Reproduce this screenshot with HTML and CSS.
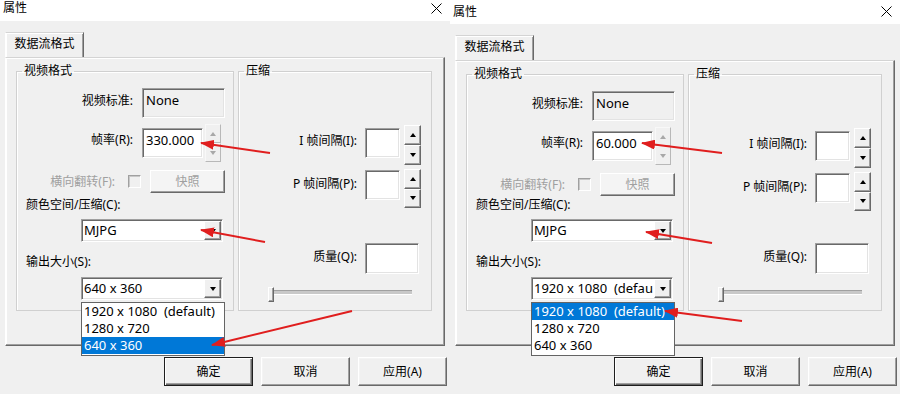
FILE: index.html
```html
<!DOCTYPE html>
<html lang="zh">
<head>
<meta charset="utf-8">
<title>属性</title>
<link rel="stylesheet" href="styles.css">
</head>
<body>
<div class="screen">

  <section class="dlg">
    <header class="titlebar">
      <span class="title">属性</span>
      <svg class="close" width="11" height="11" viewBox="0 0 11 11"><path d="M0.5 0.5L10.5 10.5M10.5 0.5L0.5 10.5" stroke="#000" stroke-width="1"/></svg>
    </header>
    <div class="body">
      <div class="tabs"><div class="tab">数据流格式</div></div>
      <div class="panel">
        <fieldset class="group g-video">
          <legend>视频格式</legend>
          <div class="row r1"><span class="lbl w-main">视频标准:</span><div class="edit ro w-none">None</div></div>
          <div class="row r2"><span class="lbl w-main">帧率(R):</span><div class="edit w-rate">330.000</div><div class="spin dis"><span class="sb"><i class="up"></i></span><span class="sb"><i class="dn"></i></span></div></div>
          <div class="row r3"><span class="lbl w-flip">横向翻转(F):</span><span class="check"></span><span class="btn btn-dis">快照</span></div>
          <div class="rlabel r4">颜色空间/压缩(C):</div>
          <div class="combo r5"><span class="ctext">MJPG</span><span class="dropbtn"><i class="dn"></i></span></div>
          <div class="rlabel r6">输出大小(S):</div>
          <div class="combo r7"><span class="ctext">640 x 360</span><span class="dropbtn"><i class="dn"></i></span>
            <ul class="popup">
              <li>1920 x 1080  (default)</li>
              <li>1280 x 720</li>
              <li class="sel">640 x 360</li>
            </ul>
          </div>
        </fieldset>
        <fieldset class="group g-comp">
          <legend>压缩</legend>
          <div class="row rI"><span class="lbl w-comp">I 帧间隔(I):</span><div class="edit w-int"></div><div class="spin sp-I"><span class="sb"><i class="up"></i></span><span class="sb"><i class="dn"></i></span></div></div>
          <div class="row rP"><span class="lbl w-comp">P 帧间隔(P):</span><div class="edit w-int"></div><div class="spin sp-P"><span class="sb"><i class="up"></i></span><span class="sb"><i class="dn"></i></span></div></div>
          <div class="row rQ"><span class="lbl w-comp">质量(Q):</span><div class="edit w-q"></div></div>
          <div class="slider"><span class="thumb"></span></div>
        </fieldset>
      </div>
      <div class="buttons">
        <span class="btn btn-default">确定</span>
        <span class="btn">取消</span>
        <span class="btn">应用(A)</span>
      </div>
    </div>
  </section>

  <section class="dlg dlg-b">
    <header class="titlebar">
      <span class="title">属性</span>
      <svg class="close" width="11" height="11" viewBox="0 0 11 11"><path d="M0.5 0.5L10.5 10.5M10.5 0.5L0.5 10.5" stroke="#000" stroke-width="1"/></svg>
    </header>
    <div class="body">
      <div class="tabs"><div class="tab">数据流格式</div></div>
      <div class="panel">
        <fieldset class="group g-video">
          <legend>视频格式</legend>
          <div class="row r1"><span class="lbl w-main">视频标准:</span><div class="edit ro w-none">None</div></div>
          <div class="row r2"><span class="lbl w-main">帧率(R):</span><div class="edit w-rate">60.000</div><div class="spin dis"><span class="sb"><i class="up"></i></span><span class="sb"><i class="dn"></i></span></div></div>
          <div class="row r3"><span class="lbl w-flip">横向翻转(F):</span><span class="check"></span><span class="btn btn-dis">快照</span></div>
          <div class="rlabel r4">颜色空间/压缩(C):</div>
          <div class="combo r5"><span class="ctext">MJPG</span><span class="dropbtn"><i class="dn"></i></span></div>
          <div class="rlabel r6">输出大小(S):</div>
          <div class="combo r7"><span class="ctext">1920 x 1080  (defau</span><span class="dropbtn"><i class="dn"></i></span>
            <ul class="popup">
              <li class="sel">1920 x 1080  (default)</li>
              <li>1280 x 720</li>
              <li>640 x 360</li>
            </ul>
          </div>
        </fieldset>
        <fieldset class="group g-comp">
          <legend>压缩</legend>
          <div class="row rI"><span class="lbl w-comp">I 帧间隔(I):</span><div class="edit w-int"></div><div class="spin sp-I"><span class="sb"><i class="up"></i></span><span class="sb"><i class="dn"></i></span></div></div>
          <div class="row rP"><span class="lbl w-comp">P 帧间隔(P):</span><div class="edit w-int"></div><div class="spin sp-P"><span class="sb"><i class="up"></i></span><span class="sb"><i class="dn"></i></span></div></div>
          <div class="row rQ"><span class="lbl w-comp">质量(Q):</span><div class="edit w-q"></div></div>
          <div class="slider"><span class="thumb"></span></div>
        </fieldset>
      </div>
      <div class="buttons">
        <span class="btn btn-default">确定</span>
        <span class="btn">取消</span>
        <span class="btn">应用(A)</span>
      </div>
    </div>
  </section>

  <svg class="arrows" width="900" height="394" viewBox="0 0 900 394">
    <defs>
      <marker id="ah" markerWidth="14" markerHeight="10" refX="13" refY="5" orient="auto" markerUnits="userSpaceOnUse">
        <path d="M0 0L14 5L0 10Z" fill="#e01e1e"/>
      </marker>
    </defs>
    <g stroke="#e01e1e" stroke-width="2" fill="none" marker-end="url(#ah)">
      <line x1="270" y1="153" x2="201" y2="143"/>
      <line x1="265" y1="242" x2="201" y2="230"/>
      <line x1="352" y1="311" x2="212" y2="345"/>
      <line x1="722" y1="153" x2="642" y2="143"/>
      <line x1="712" y1="243" x2="646" y2="232"/>
      <line x1="742" y1="321" x2="665" y2="311"/>
    </g>
  </svg>
</div>
</body>
</html>
```
FILE: styles.css
```css
* { box-sizing: border-box; }
html, body { margin: 0; padding: 0; }
body {
  width: 900px;
  height: 394px;
  overflow: hidden;
  background: #f0f0f0;
  font-family: "Noto Sans", "Noto Sans CJK SC", sans-serif;
  font-size: 12px;
  color: #000;
}
.screen { position: relative; display: flex; width: 900px; height: 394px; }

.dlg {
  width: 450px;
  height: 394px;
  background: #f0f0f0;
  display: flex;
  flex-direction: column;
  flex: none;
}
.titlebar {
  flex: none;
  height: 21px;
  background: #fff;
  display: flex;
  align-items: flex-start;
  justify-content: space-between;
  padding: 0 8px 0 3px;
}
.title { line-height: 16px; font-size: 12px; }
.close { margin-top: 3px; display: block; }
.dlg-b .titlebar { height: 24px; padding-top: 4px; }
.dlg-b .close { margin-top: 2px; }

.body { flex: 1; display: flex; flex-direction: column; padding: 11px 0 0 5px; }

.tabs { display: flex; height: 25px; flex: none; }
.tab {
  width: 79px;
  height: 25px;
  border-style: solid;
  border-width: 1px 1px 0 1px;
  border-color: #d4d4d4 #696969 transparent #fff;
  box-shadow: inset 1px 1px #fff, inset -1px 0 #a0a0a0;
  text-align: center;
  line-height: 22px;
  font-size: 12px;
  background: #f0f0f0;
}

.panel {
  flex: none;
  width: 440px;
  height: 289px;
  display: flex;
  align-items: flex-start;
  gap: 4px;
  padding: 5px 0 0 10px;
  border: 1px solid;
  border-color: #d4d4d4 #696969 #696969 #fff;
  box-shadow: inset -1px -1px #a0a0a0, inset 1px 1px #fff;
}
.dlg-b .panel { height: 286px; }

.group {
  margin: 0;
  padding: 0;
  min-width: 0;
  height: 248px;
  border: 1px solid #d0d0d0;
  box-shadow: inset 1px 1px #fff;
}
.dlg-b .group { height: 245px; }
.group legend {
  margin-left: 5px;
  padding: 0 2px;
  line-height: 16px;
  font-size: 12px;
}
.g-video { width: 218px; }
.g-comp { width: 194px; }

.row { display: flex; align-items: flex-start; }
.lbl { flex: none; line-height: 16px; text-align: right; white-space: nowrap; }
.w-main { width: 116px; margin-right: 9px; }
.w-flip { width: 98px; color: #a0a0a0; }
.w-comp { width: 118px; margin-right: 8px; }

.edit {
  flex: none;
  height: 30px;
  background: #fff;
  border: 1px solid;
  border-color: #a0a0a0 #fff #fff #a0a0a0;
  box-shadow: inset 1px 1px #696969, inset -1px -1px #e3e3e3;
  font-size: 13px;
  line-height: 17px;
  padding: 3px 0 0 3px;
  white-space: nowrap;
}
.ro { background: #f0f0f0; }
.w-none { width: 83px; }
.w-rate { width: 61px; margin-top: 4px; }
.w-int { width: 35px; }
.w-q { width: 54px; height: 31px; }

.spin { flex: none; display: flex; flex-direction: column; width: 16px; height: 38px; margin-left: 2px; }
.sb {
  flex: 1;
  display: flex;
  align-items: center;
  justify-content: center;
  background: #f0f0f0;
  border: 1px solid;
  border-color: #fff #696969 #696969 #fff;
  box-shadow: inset -1px -1px #a0a0a0;
}
.spin.dis .sb { border-color: #f8f8f8 #b8b8b8 #b8b8b8 #f8f8f8; box-shadow: none; }
.up, .dn {
  display: block;
  width: 1px;
  height: 0;
  border-left: 3px solid transparent;
  border-right: 3px solid transparent;
}
.up { border-bottom: 4px solid #000; }
.dn { border-top: 4px solid #000; }
.spin.dis .up { border-bottom-color: #a8a8a8; }
.spin.dis .dn { border-top-color: #a8a8a8; }
.sp-I { width: 17px; height: 40px; margin-left: 4px; }
.sp-P { width: 17px; height: 39px; margin-left: 4px; }

.r1 { margin-top: 9px; height: 30px; align-items: center; }
.r1 .lbl { padding-bottom: 4px; }
.r2 { margin-top: 6px; height: 38px; }
.r2 .lbl { margin-top: 8px; }
.r3 { margin-top: 8px; height: 23px; align-items: center; }
.rlabel { line-height: 16px; padding-left: 9px; white-space: nowrap; }
.r4 { margin-top: 4px; }
.dlg-b .r4 { margin-top: 1px; }
.r5 { margin-top: 6px; }
.r6 { margin-top: 12px; }
.r7 { margin-top: 7px; }

.check {
  flex: none;
  width: 13px;
  height: 13px;
  margin-left: 13px;
  background: #f0f0f0;
  border: 1px solid;
  border-color: #a0a0a0 #fff #fff #a0a0a0;
  box-shadow: inset 1px 1px #c8c8c8;
}

.btn {
  flex: none;
  width: 89px;
  height: 29px;
  display: flex;
  align-items: center;
  justify-content: center;
  background: #f0f0f0;
  border: 1px solid;
  border-color: #fff #696969 #696969 #fff;
  box-shadow: inset -1px -1px #a0a0a0, inset 1px 1px #f4f4f4;
  font-size: 12px;
  line-height: 16px;
}
.btn-dis {
  width: 75px;
  height: 23px;
  margin-left: 9px;
  color: #a0a0a0;
  background: #f4f4f4;
}
.btn-default {
  border-color: #1e1e1e;
  box-shadow: inset 1px 1px #fff, inset -1px -1px #696969, inset -2px -2px #a0a0a0;
}

.combo {
  position: relative;
  display: flex;
  align-items: center;
  width: 142px;
  height: 23px;
  margin-left: 64px;
  background: #fff;
  border: 1px solid;
  border-color: #a0a0a0 #fff #fff #a0a0a0;
  box-shadow: inset 1px 1px #696969, inset -1px -1px #e3e3e3;
  padding-left: 2px;
  font-size: 13px;
}
.ctext { flex: 1; min-width: 0; white-space: pre; line-height: 17px; }
.dropbtn {
  flex: none;
  width: 17px;
  height: 19px;
  margin-right: 1px;
  display: flex;
  align-items: center;
  justify-content: center;
  background: #f0f0f0;
  border: 1px solid;
  border-color: #fff #696969 #696969 #fff;
  box-shadow: inset -1px -1px #a0a0a0;
}
.popup {
  position: absolute;
  left: -1px;
  top: calc(100% + 3px);
  width: 144px;
  margin: 0;
  padding: 0 0 1px;
  list-style: none;
  background: #fff;
  border: 1px solid #646464;
  z-index: 2;
}
.popup li {
  height: 17px;
  line-height: 17px;
  padding-left: 2px;
  font-size: 13px;
  white-space: pre;
}
.popup li.sel { background: #0078d7; color: #fff; }

.rI { margin-top: 46px; height: 40px; }
.rI .lbl { margin-top: 8px; }
.rI .edit { margin-top: 3px; }
.rP { margin-top: 4px; height: 39px; }
.rP .lbl { margin-top: 7px; }
.rP .edit { margin-top: 1px; }
.rQ { margin-top: 35px; height: 31px; }
.dlg-b .rQ { margin-top: 32px; }
.rQ .lbl { margin-top: 6px; }

.slider {
  position: relative;
  display: flex;
  width: 144px;
  height: 15px;
  margin: 13px 0 0 29px;
}
.slider::before {
  content: "";
  position: absolute;
  left: 0;
  right: 0;
  top: 3px;
  height: 3px;
  border-top: 1px solid #a0a0a0;
  border-bottom: 1px solid #fff;
  background: #c8c8c8;
}
.thumb {
  position: relative;
  width: 6px;
  height: 15px;
  background: #f0f0f0;
  border: 1px solid;
  border-color: #fff #696969 #696969 #fff;
  box-shadow: inset -1px -1px #a0a0a0;
}

.buttons {
  flex: none;
  display: flex;
  justify-content: flex-end;
  gap: 8px;
  margin-top: 11px;
  padding-right: 3px;
}

.arrows { position: absolute; left: 0; top: 0; pointer-events: none; z-index: 5; }
```
